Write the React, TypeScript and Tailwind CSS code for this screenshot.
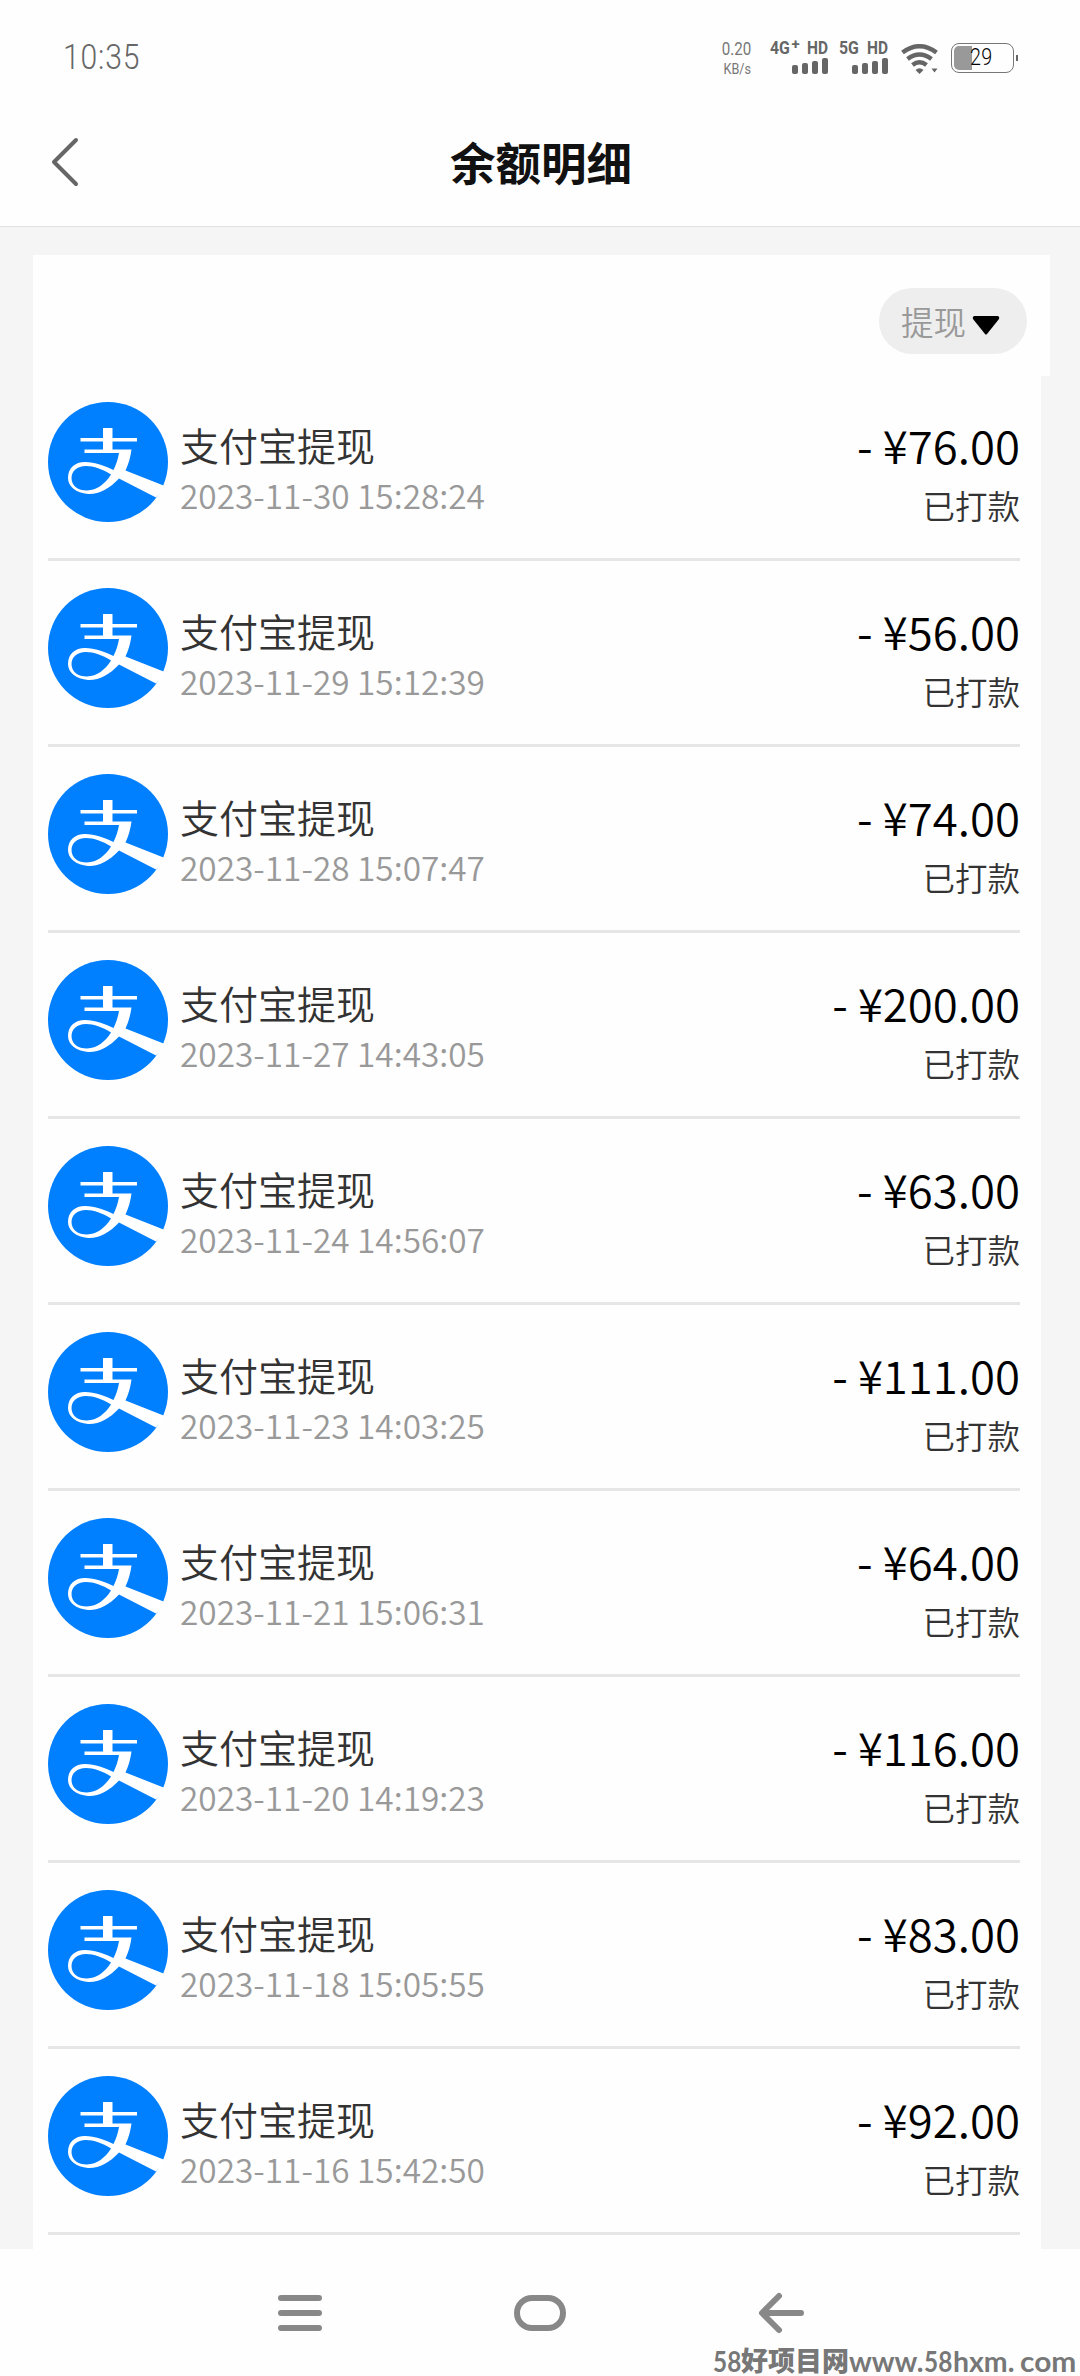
import React from 'react';
import { clsx } from 'clsx';

const records = [
  { time: '2023-11-30 15:28:24', amount: '76.00' },
  { time: '2023-11-29 15:12:39', amount: '56.00' },
  { time: '2023-11-28 15:07:47', amount: '74.00' },
  { time: '2023-11-27 14:43:05', amount: '200.00' },
  { time: '2023-11-24 14:56:07', amount: '63.00' },
  { time: '2023-11-23 14:03:25', amount: '111.00' },
  { time: '2023-11-21 15:06:31', amount: '64.00' },
  { time: '2023-11-20 14:19:23', amount: '116.00' },
  { time: '2023-11-18 15:05:55', amount: '83.00' },
  { time: '2023-11-16 15:42:50', amount: '92.00' },
];

function AlipayLogo() {
  return (
    <svg className="w-[120px] h-[120px] shrink-0" viewBox="0 0 120 120">
      <circle cx="60" cy="60" r="60" fill="#007fff" />
      <path d="M55 26H64.500V36H89V39.500H64.500V47.500H83.500C82.500 55 80.500 62 77.500 68.500L115.500 83.500C115.500 87 112 92 108 95.500L71 76.500C61 87 51 92.500 40 92C28 91 20 84.500 20 76C20 66 27 60 37 60C47 60 57 64 65.500 68C68 63 70 57 71 51H36.500V47.500H55V39.500H32.500V36H55Z" fill="#fff" />
      <path d="M63 72.500C54 67 46 64 38 64C29 64 23.500 69 23.500 76C23.500 84 30 88.500 39 88.500C49 88 57 82 63 72.500Z" fill="#007fff" />
    </svg>
  );
}

function Signal({ label, plus }: { label: string; plus?: boolean }) {
  return (
    <div className={clsx('flex flex-col items-end', plus ? 'w-[58px]' : 'w-[49px]')}>
      <div className="flex h-[14px] w-full items-center justify-between whitespace-nowrap text-[18px] font-bold leading-none">
        <span className="w-[20px] origin-left scale-x-[0.88]">{label}</span>
        {plus && <span className="-mt-2 mr-[6px] text-[15px]">+</span>}
        <span className="w-[21px] origin-left scale-x-[0.86]">HD</span>
      </div>
      <div className="mt-[3px] flex h-[16px] items-end gap-[4px]">
        {['h-[9px]', 'h-[11px]', 'h-[13px]', 'h-[16px]'].map((h) => (
          <i key={h} className={clsx('w-[6px] rounded-[2px] bg-[#666]', h)} />
        ))}
      </div>
    </div>
  );
}

function StatusBar() {
  return (
    <div className="flex h-[112px] items-start justify-between pl-[63px] pr-[62px] font-['Roboto','Liberation_Sans',sans-serif] text-[#666]">
      <span className="mt-[37px] origin-left scale-x-[0.86] text-[35px] font-light leading-[42px] tracking-[1px]">10:35</span>
      <div className="mt-[41px] flex items-start">
        <div className="flex w-[30px] flex-col items-center text-[#777]">
          <span className="scale-x-[0.84] text-[18px] leading-[16px]">0.20</span>
          <span className="mt-[5px] scale-x-[0.84] text-[15px] leading-[14px]">KB/s</span>
        </div>
        <div className="ml-[18px]"><Signal label="4G" plus /></div>
        <div className="ml-[11px]"><Signal label="5G" /></div>
        <svg className="ml-[13px] mt-[3px] h-[30px] w-[38px]" viewBox="0 0 38 30" fill="none" stroke="#666" strokeWidth="4.500">
          <path d="M1.500 8.500Q18.500 -4 35.500 8.500M6.500 15Q18.500 6 30.500 15M11.500 21Q18.500 15.500 25.500 21" />
          <path d="M14.500 26Q18.500 22.500 22.500 26L18.500 30ZM30.500 24.500H36.500L33.500 28.500Z" fill="#666" stroke="none" />
        </svg>
        <div className="ml-[12px] mt-[2px] flex items-center">
          <div className="flex h-[30px] w-[63px] items-center rounded-[8px] border-[1.500px] border-[#777] pl-[2px]">
            <div className="h-[24px] w-[18px] shrink-0 rounded-l-[5px] bg-[#999]" />
            <span className="-ml-[2px] -mt-[3px] origin-left scale-x-[0.82] text-[24px] font-light leading-none tracking-[0.500px] text-black">29</span>
          </div>
          <i className="ml-[2px] h-[6px] w-[2px] bg-[#666]" />
        </div>
      </div>
    </div>
  );
}

export default function App() {
  return (
    <div className="relative flex h-[2376px] w-[1080px] flex-col overflow-hidden bg-[#f5f5f5] font-['Noto_Sans_CJK_SC',sans-serif]">
      <header className="h-[227px] shrink-0 border-b border-[#e0e0e0] bg-[#fefefe]">
        <StatusBar />
        <div className="flex h-[100px] items-center">
          <svg className="ml-[50px] h-[52px] w-[30px]" viewBox="0 0 30 52" fill="none" stroke="#666" strokeWidth="4" strokeLinecap="round" strokeLinejoin="round">
            <path d="M26 4L4 26L26 48" />
          </svg>
          <h1 className="ml-[370px] text-[45.500px] font-bold leading-none text-[#111]">余额明细</h1>
        </div>
      </header>

      <main className="ml-[33px] mt-[28px] h-[1994px] shrink-0 overflow-hidden">
        <div className="flex h-[121px] w-[1017px] items-start justify-end bg-[#fefefe] pr-[23px] pt-[33px]">
          <button className="flex h-[66px] w-[148px] items-center rounded-full bg-[#eee] pl-[22px] text-[32.500px] font-[350] leading-none text-[#999]">
            提现
            <svg className="ml-[6px] mt-[8px] h-[19px] w-[28px]" viewBox="0 0 28 19">
              <path d="M2 0H26Q28 1 27 3L15 18Q14 19 13 18L1 3Q0 1 2 0Z" fill="#000" />
            </svg>
          </button>
        </div>
        <ul className="h-[1873px] w-[1008px] bg-[#fefefe] pl-[15px] pr-[21px] font-[350]">
          {records.map((r, i) => (
            <li key={r.time} className={clsx('flex items-start border-b-[3px] border-[#e6e6e6]', i === 0 ? 'h-[185px] pt-[26px]' : 'h-[186px] pt-[27px]')}>
              <AlipayLogo />
              <div className="ml-[12px] mt-[16px] flex-1">
                <p className="text-[39px] leading-[52px] text-[#333]">支付宝提现</p>
                <p className="text-[33.400px] leading-[50px] text-[#999]">{r.time}</p>
              </div>
              <div className="mt-[10px] text-right">
                <p className="text-[45.500px] leading-[64px] text-black">- ¥{r.amount}</p>
                <p className="text-[32.500px] leading-[58px] text-[#333]">已打款</p>
              </div>
            </li>
          ))}
        </ul>
      </main>

      <nav className="flex flex-1 items-start bg-[#fefefe] pt-[42px]">
        <svg className="ml-[277px] h-[44px] w-[46px]" viewBox="0 0 46 44" fill="none" stroke="#888" strokeWidth="6" strokeLinecap="round">
          <path d="M4 7H42M4 22H42M4 37H42" />
        </svg>
        <svg className="ml-[191px] h-[44px] w-[52px]" viewBox="0 0 52 44" fill="none" stroke="#888" strokeWidth="6">
          <rect x="3" y="7" width="46" height="30" rx="15" />
        </svg>
        <svg className="ml-[192px] h-[44px] w-[48px]" viewBox="0 0 48 44" fill="none" stroke="#888" strokeWidth="6" strokeLinecap="round" strokeLinejoin="round">
          <path d="M43 22H5M21 5L4 22L21 39" />
        </svg>
      </nav>

      <div className="absolute bottom-0 left-[713px] flex h-[29px] items-start whitespace-nowrap font-['Lato','Noto_Sans_CJK_SC',sans-serif] text-[29px] font-bold leading-[27px] text-[#777]">
        <span className="w-[28px] origin-left scale-x-[0.84]">58</span>
        <span className="w-[108px] text-[27px] font-black">好项目网</span>
        <span className="w-[75px] origin-left scale-x-[0.98]">www.</span>
        <span className="w-[29px] origin-left scale-x-[0.84]">58</span>
        <span className="w-[67px] origin-left scale-x-[0.98]">hxm.</span>
        <span className="w-[54px] origin-left scale-x-[1.03]">com</span>
      </div>
    </div>
  );
}
